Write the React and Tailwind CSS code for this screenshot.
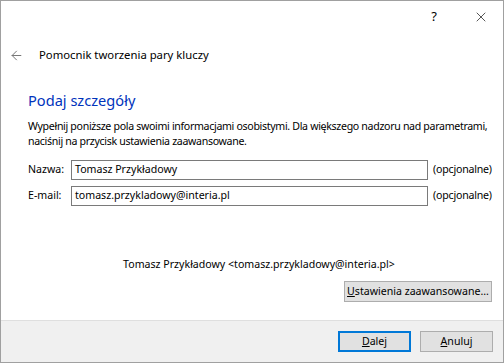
import { ArrowLeft, X } from "lucide-react";

function Btn({ children, primary, className = "" }) {
  return (
    <button
      className={`h-[21px] bg-[#e1e1e1] text-black leading-none whitespace-nowrap ${
        primary ? "border-2 border-[#0078d7]" : "border border-[#adadad]"
      } ${className}`}
    >
      {children}
    </button>
  );
}

function Field({ label, value }) {
  return (
    <div className="flex items-center h-[20px]">
      <span className="w-[43px] shrink-0">{label}</span>
      <div className="w-[357px] shrink-0 h-[20px] border border-[#7a7a7a] px-[3px] flex items-center">
        {value}
      </div>
      <span className="ml-[5px] whitespace-nowrap tracking-[-0.2px]">(opcjonalne)</span>
    </div>
  );
}

export default function App() {
  return (
    <div
      className="w-[504px] h-[363px] bg-white border border-[#a0a0a0] flex flex-col text-[10.6px] text-black overflow-hidden"
      style={{ fontFamily: '"Noto Sans", "Open Sans", sans-serif' }}
    >
      {/* title bar */}
      <div className="h-[32px] flex justify-end items-center pr-[14px]">
        <span className="mr-[36px] text-[13px]">?</span>
        <X size={16} strokeWidth={1} />
      </div>

      {/* wizard header */}
      <div className="h-[44px] flex items-center pl-[8px]">
        <ArrowLeft size={15} strokeWidth={1.6} className="text-[#777]" />
        <span className="ml-[15px] text-[11.3px]">
          Pomocnik tworzenia pary kluczy
        </span>
      </div>

      {/* body */}
      <div className="flex-1 px-[27px] flex flex-col">
        <h1 className="mt-[13px] text-[14.6px] text-[#0033bc] leading-[20px]">
          Podaj szczegóły
        </h1>
        <p className="mt-[9px] leading-[15px] whitespace-nowrap tracking-[-0.32px]">
          Wypełnij poniższe pola swoimi informacjami osobistymi. Dla większego
          nadzoru nad parametrami,
          <br />
          naciśnij na przycisk ustawienia zaawansowane.
        </p>
        <div className="mt-[11px] flex flex-col gap-[6px]">
          <Field label="Nazwa:" value="Tomasz Przykładowy" />
          <Field label="E-mail:" value="tomasz.przykladowy@interia.pl" />
        </div>
        <div className="mt-[51px] text-center pl-[14px]">
          Tomasz Przykładowy &lt;tomasz.przykladowy@interia.pl&gt;
        </div>
        <div className="mt-[8px] flex justify-end mr-[-16px]">
          <Btn className="w-[148px]">
            <u>U</u>stawienia zaawansowane...
          </Btn>
        </div>
      </div>

      {/* footer */}
      <div className="h-[42px] bg-[#f0f0f0] border-t border-[#dfdfdf] flex justify-end items-center gap-[9px] pr-[10px]">
        <Btn primary className="w-[73px]">
          <u>D</u>alej
        </Btn>
        <Btn className="w-[73px]">
          <u>A</u>nuluj
        </Btn>
      </div>
    </div>
  );
}
